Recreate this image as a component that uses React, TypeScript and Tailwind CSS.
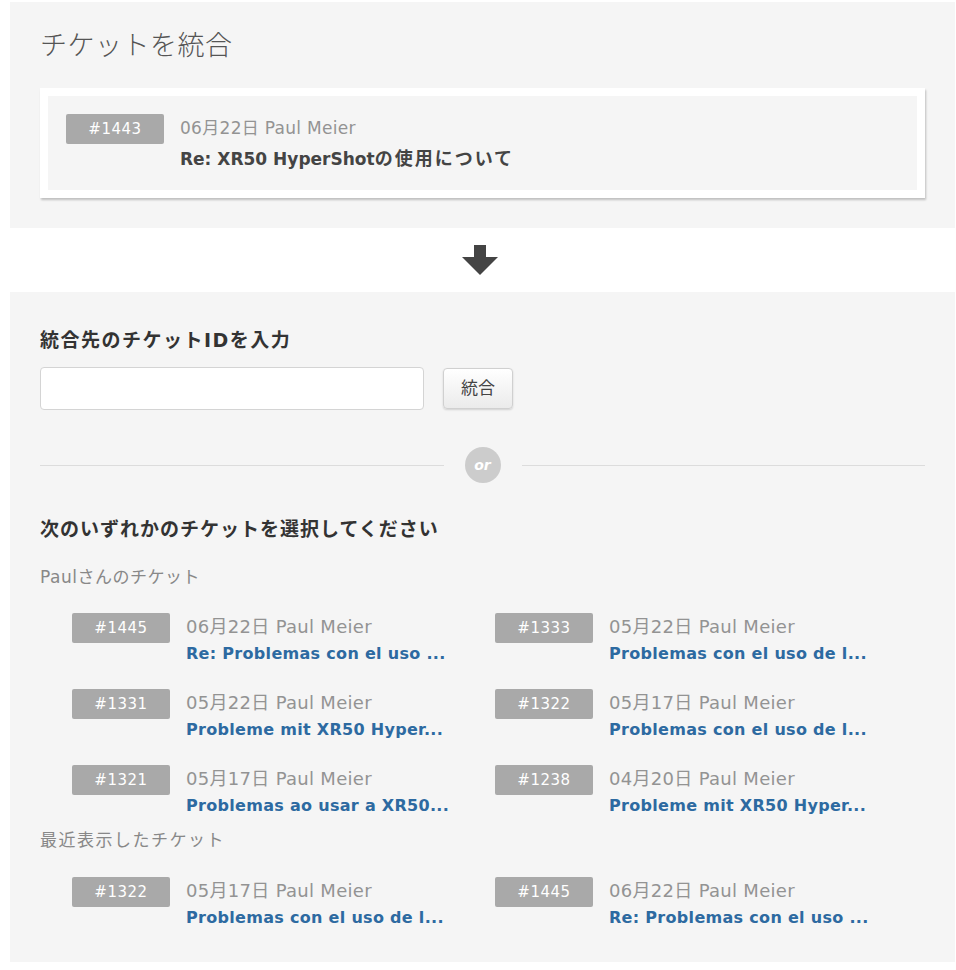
import React from "react";

interface TicketProps {
  id: number;
  date: string;
  author: string;
  subject: string;
}

const PAUL_TICKETS: TicketProps[] = [
  { id: 1445, date: "06月22日", author: "Paul Meier", subject: "Re: Problemas con el uso ..." },
  { id: 1333, date: "05月22日", author: "Paul Meier", subject: "Problemas con el uso de l..." },
  { id: 1331, date: "05月22日", author: "Paul Meier", subject: "Probleme mit XR50 Hyper..." },
  { id: 1322, date: "05月17日", author: "Paul Meier", subject: "Problemas con el uso de l..." },
  { id: 1321, date: "05月17日", author: "Paul Meier", subject: "Problemas ao usar a XR50..." },
  { id: 1238, date: "04月20日", author: "Paul Meier", subject: "Probleme mit XR50 Hyper..." },
];

const RECENT_TICKETS: TicketProps[] = [
  { id: 1322, date: "05月17日", author: "Paul Meier", subject: "Problemas con el uso de l..." },
  { id: 1445, date: "06月22日", author: "Paul Meier", subject: "Re: Problemas con el uso ..." },
];

const Badge = ({ id }: { id: number }) => (
  <div className="w-[98px] h-[30px] shrink-0 rounded-[2px] bg-[#a9a9a9] text-white text-[15px] leading-[31px] text-center tracking-[0.5px]">
    #{id}
  </div>
);

const TicketItem = ({ ticket }: { ticket: TicketProps }) => (
  <div className="flex cursor-pointer">
    <Badge id={ticket.id} />
    <div className="ml-[16px] flex flex-col">
      <p className="text-[18px] leading-[28px] text-[#939393] tracking-[0.3px]">
        {ticket.date} {ticket.author}
      </p>
      <p className="mt-[2px] text-[16px] leading-[22px] font-bold text-[#2d6aa1] whitespace-nowrap tracking-[0.3px]">
        {ticket.subject}
      </p>
    </div>
  </div>
);

const TicketGrid = ({ tickets }: { tickets: TicketProps[] }) => (
  <div className="grid grid-cols-[423px_423px] gap-y-[24px] pl-[32px]">
    {tickets.map((ticket, index) => (
      <TicketItem key={`ticket_${index}`} ticket={ticket} />
    ))}
  </div>
);

const DownArrow = () => (
  <svg width="36" height="30" viewBox="0 0 36 30" fill="#444">
    <rect x="12" y="0" width="12" height="13" />
    <polygon points="0,12 36,12 18,30" />
  </svg>
);

const App = () => {
  return (
    <div
      className="min-h-[970px] bg-white pt-[2px] pl-[10px] pr-[1px]"
      style={{ fontFamily: '"DejaVu Sans", "Noto Sans CJK JP", sans-serif' }}
    >
      {/* source ticket */}
      <section className="bg-[#f5f5f5] px-[30px] pt-[26px] pb-[30px]">
        <h1 className="text-[27px] leading-[36px] font-light text-[#555] tracking-[0.5px]">チケットを統合</h1>
        <div className="mt-[24px] border-[8px] border-white shadow-[1px_2px_2px_rgba(0,0,0,0.22)]">
          <div className="flex bg-[#f5f5f5] p-[18px] h-[94px]">
            <Badge id={1443} />
            <div className="ml-[16px] flex flex-col">
              <p className="text-[17px] leading-[28px] text-[#939393] tracking-[0.3px]">06月22日 Paul Meier</p>
              <p className="mt-[4px] text-[17px] leading-[26px] font-bold text-[#444] whitespace-nowrap">
                Re: XR50 HyperShot<span className="text-[18px] tracking-[2px]">の使用について</span>
              </p>
            </div>
          </div>
        </div>
      </section>

      <div className="h-[64px] flex items-center justify-center pr-[6px]">
        <DownArrow />
      </div>

      {/* target ticket */}
      <section className="bg-[#f5f5f5] px-[30px] pt-[35px] pb-[33px]">
        <h2 className="text-[19px] leading-[26px] font-bold text-[#333] tracking-[1.5px]">統合先のチケットIDを入力</h2>
        <div className="mt-[14px] flex items-center">
          <input
            type="text"
            className="w-[384px] h-[43px] rounded-[4px] border border-[#d4d4d4] bg-white px-3 outline-none"
          />
          <button className="ml-[19px] w-[70px] h-[41px] rounded-[4px] border border-[#d0d0d0] bg-linear-to-b from-white to-[#ebebeb] shadow-[0_1px_2px_rgba(0,0,0,0.15)] text-[17px] text-[#444]">
            統合
          </button>
        </div>

        <div className="mt-[37px] flex items-center h-[36px]">
          <div className="flex-1 h-px bg-[#dcdcdc]" />
          <div className="mx-[21px] w-[36px] h-[36px] rounded-full bg-[#cccccc] flex items-center justify-center text-white text-[14px] font-bold italic">
            or
          </div>
          <div className="flex-1 h-px bg-[#dcdcdc]" />
        </div>

        <h2 className="mt-[32px] text-[19px] leading-[28px] font-bold text-[#333] tracking-[1px]">
          次のいずれかのチケットを選択してください
        </h2>
        <p className="mt-[21px] text-[17px] leading-[26px] text-[#888] tracking-[0.5px]">Paulさんのチケット</p>
        <div className="mt-[23px]">
          <TicketGrid tickets={PAUL_TICKETS} />
        </div>
        <p className="mt-[10px] text-[17px] leading-[26px] text-[#888] tracking-[1.5px]">最近表示したチケット</p>
        <div className="mt-[24px]">
          <TicketGrid tickets={RECENT_TICKETS} />
        </div>
      </section>
    </div>
  );
};

export default App;
